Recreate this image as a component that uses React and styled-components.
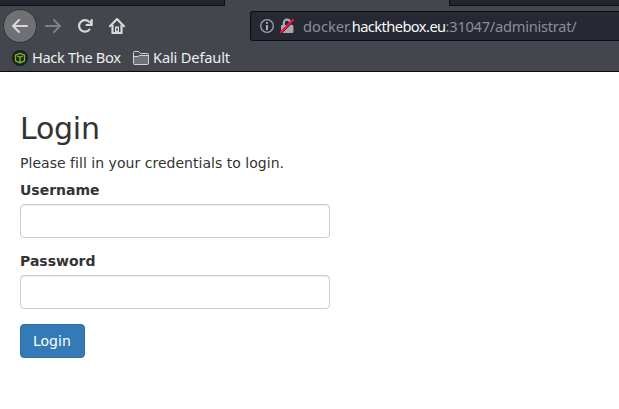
import React from "react";
import styled, { createGlobalStyle } from "styled-components";

const GlobalStyle = createGlobalStyle`
  * { box-sizing: border-box; }
  body { margin: 0; background: #fff; overflow: hidden; }
`;

const Window = styled.div`
  width: 619px;
  height: 409px;
  display: flex;
  flex-direction: column;
  overflow: hidden;
  background: #fff;
`;

const Chrome = styled.header`
  height: 72px;
  flex: none;
  background: #43464d;
  border-bottom: 1px solid #0c0c0d;
  font-family: "Noto Sans", sans-serif;
  font-size: 14.67px;
  color: #eeeeec;
`;

const TabStrip = styled.div`
  height: 6px;
  display: grid;
  grid-template-columns: 225px 224px 1fr;
`;

const Tab = styled.div`
  background: #22242e;
  border: 0 solid #101116;
  border-bottom-width: 1px;
  border-left-width: ${(p) => (p.$side === "right" ? "1px" : "0")};
  border-right-width: ${(p) => (p.$side === "left" ? "1px" : "0")};
`;

const ActiveTab = styled.div`
  background: #43464d;
`;

const Toolbar = styled.div`
  height: 40px;
  display: flex;
  align-items: center;
  padding-left: 3px;
`;

const NavButton = styled.div`
  width: 32px;
  height: 32px;
  display: flex;
  align-items: center;
  justify-content: center;
  color: ${(p) => (p.$disabled ? "#7f8185" : "#d9dad8")};
`;

const BackButton = styled(NavButton)`
  width: 34px;
  height: 34px;
  border-radius: 50%;
  background: #707175;
  border: 1px solid #303238;
`;

const AddressBar = styled.div`
  margin-left: 117px;
  flex: 1;
  height: 30px;
  display: flex;
  align-items: center;
  background: #262834;
  border: 1px solid #0d0e12;
  border-right: 0;
  border-radius: 3px 0 0 3px;
  padding-left: 9px;
  color: #8d8f94;
`;

const AddressIcon = styled.svg`
  flex: none;
  margin-right: ${(p) => p.$gap}px;
`;

const Url = styled.div`
  white-space: nowrap;
  line-height: 20px;
`;

const Host = styled.span`
  color: #f9f9fa;
  letter-spacing: -0.57px;
`;

const Path = styled.span`
  letter-spacing: -0.27px;
`;

const Bookmarks = styled.div`
  height: 24px;
  display: flex;
  align-items: center;
  padding-left: 12px;
`;

const Bookmark = styled.div`
  display: flex;
  align-items: center;
  gap: 4px;
  width: ${(p) => p.$width}px;
`;

const BookmarkLabel = styled.span`
  line-height: 20px;
  padding-bottom: 2px;
  white-space: nowrap;
  letter-spacing: ${(p) => p.$tracking}px;
`;

const Page = styled.main`
  width: 350px;
  padding: 20px;
  font: 14px "DejaVu Sans", sans-serif;
  line-height: 17px;
  color: #333;
`;

const Title = styled.h2`
  margin: 20px 0 10px;
  font-size: 30px;
  font-weight: 500;
  line-height: 33px;
  letter-spacing: -0.25px;
`;

const Hint = styled.p`
  margin: 0 0 10px;
  white-space: nowrap;
  letter-spacing: 0.03px;
`;

const Field = styled.div`
  margin-bottom: 15px;
`;

const Label = styled.label`
  display: block;
  margin-bottom: 5px;
  font-weight: 700;
`;

const Input = styled.input`
  display: block;
  width: 100%;
  height: 34px;
  padding: 6px 12px;
  font: inherit;
  color: #555;
  background: #fff;
  border: 1px solid #ccc;
  border-radius: 4px;
  box-shadow: inset 0 1px 1px rgba(0, 0, 0, 0.075);
  outline: none;
`;

const SubmitButton = styled.button`
  display: block;
  width: 65px;
  height: 34px;
  padding: 0 0 0 12px;
  text-align: left;
  font: 14px "DejaVu Sans", sans-serif;
  line-height: 20px;
  color: #fff;
  background: #337ab7;
  border: 1px solid #2e6da4;
  border-radius: 4px;
`;

const stroke = {
  fill: "none",
  stroke: "currentColor",
  strokeWidth: 2,
  strokeLinecap: "round",
  strokeLinejoin: "round",
};

const Arrow = ({ flip }) => (
  <svg width="16" height="16" viewBox="0 0 16 16" {...stroke}>
    <path d={flip ? "M1 8h14M9 2l6 6-6 6" : "M15 8H1M7 2L1 8l6 6"} />
  </svg>
);

const Reload = () => (
  <svg width="16" height="16" viewBox="0 0 16 16" {...stroke}>
    <path d="M12.4 11.6A5.8 5.8 0 1 1 12 3.8L13.5 5.5" strokeWidth="2.2" />
    <path d="M15.5 1v7H8.5z" fill="currentColor" stroke="none" />
    <path d="M12.2 4.1L10.5 5.8h2.8z" fill="#43464d" stroke="none" />
    <path d="M14.5 2v5H9.5" />
  </svg>
);

const Home = () => (
  <svg width="16" height="16" viewBox="0 0 16 16" {...stroke}>
    <path d="M1 8.2L8 1l7 7.2" strokeWidth="2.1" />
    <path d="M3.5 7.5V15h9V7.5" strokeWidth="2.2" />
    <path d="M6 8.5h4V15H6z" fill="currentColor" stroke="none" />
    <path d="M8 10v3" stroke="#43464d" strokeWidth="1.3" strokeLinecap="butt" />
  </svg>
);

const CubeBadge = () => (
  <svg width="16" height="16" viewBox="0 0 16 16">
    <circle cx="8" cy="8" r="8" fill="#171f29" />
    <path
      d="M8 3.3l4.5 1.8v5.7L8 12.8l-4.5-2V5.1zM5.3 6.2L8 7.2l2.7-1M8 7.2v5.2"
      fill="none"
      stroke="#84b31b"
      strokeWidth="1.4"
      strokeLinejoin="round"
    />
  </svg>
);

const Folder = () => (
  <svg width="16" height="14" viewBox="0 0 16 14">
    <path
      d="M.5 12.5v-11q0-1 1-1h4l2 2h7q1 0 1 1v9q0 1-1 1h-13q-1 0-1-1z"
      fill="#707276"
      stroke="#d3d4d2"
    />
    <path d="M1 1h4.3l2 2H15v1.5H6.5L5 5.5H1z" fill="#484b51" />
    <path d="M.5 5.5H5l1.5-1h9" fill="none" stroke="#d3d4d2" />
  </svg>
);

export default function App() {
  return (
    <>
      <GlobalStyle />
      <Window>
        <Chrome>
          <TabStrip>
            <Tab $side="left" />
            <ActiveTab />
            <Tab $side="right" />
          </TabStrip>
          <Toolbar>
            <BackButton>
              <Arrow />
            </BackButton>
            <NavButton $disabled>
              <Arrow flip />
            </NavButton>
            <NavButton>
              <Reload />
            </NavButton>
            <NavButton>
              <Home />
            </NavButton>
            <AddressBar>
              <AddressIcon $gap={6} width="14" height="14" viewBox="0 0 14 14">
                <circle cx="7" cy="7" r="6.3" fill="none" stroke="#a2a3a8" strokeWidth="1.3" />
                <path d="M7 3v1.8M7 6v5" stroke="#b1b1b5" strokeWidth="1.9" />
              </AddressIcon>
              <AddressIcon $gap={9} width="14" height="16" viewBox="0 0 14 16">
                <path d="M3.8 8V5a3.2 3.4 0 0 1 6.4 0v3" fill="none" stroke="#a9aaad" strokeWidth="2.2" />
                <rect x="1" y="7" width="12.4" height="8" rx="1" fill="#a9aaad" />
                <path d="M1.5 15.5L14.5 2.5" stroke="#262834" strokeWidth="1" />
                <path d="M.3 14.7L13.7 1.3" stroke="#fa0a3c" strokeWidth="2" />
              </AddressIcon>
              <Url>
                docker.<Host>hackthebox.eu</Host>
                <Path>:31047/administrat/</Path>
              </Url>
            </AddressBar>
          </Toolbar>
          <Bookmarks>
            <Bookmark $width={121}>
              <CubeBadge />
              <BookmarkLabel $tracking={-0.36}>Hack The Box</BookmarkLabel>
            </Bookmark>
            <Bookmark $width={100}>
              <Folder />
              <BookmarkLabel $tracking={-0.17}>Kali Default</BookmarkLabel>
            </Bookmark>
          </Bookmarks>
        </Chrome>
        <Page>
          <Title>Login</Title>
          <Hint>Please fill in your credentials to login.</Hint>
          <Field>
            <Label htmlFor="username">Username</Label>
            <Input id="username" type="text" />
          </Field>
          <Field>
            <Label htmlFor="password">Password</Label>
            <Input id="password" type="password" />
          </Field>
          <SubmitButton type="button">Login</SubmitButton>
        </Page>
      </Window>
    </>
  );
}
